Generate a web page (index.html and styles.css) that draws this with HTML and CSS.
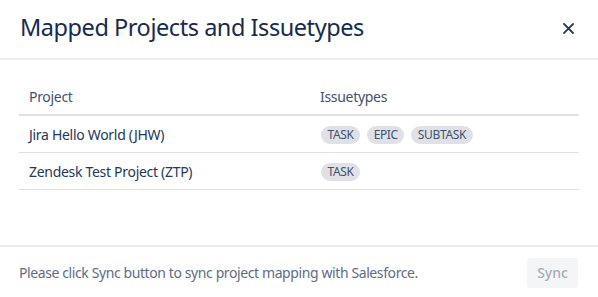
FILE: index.html
```html
<!DOCTYPE html>
<html>
<head>
<meta charset="utf-8">
<link rel="stylesheet" href="styles.css">
</head>
<body>
<div class="modal">
  <header class="modal-header">
    <h1 class="title">Mapped Projects and Issuetypes</h1>
    <button class="close" aria-label="Close">
      <svg width="11" height="11" viewBox="0 0 11 11"><path d="M1 1L10 10M10 1L1 10" stroke="#253858" stroke-width="1.8" stroke-linecap="square"/></svg>
    </button>
  </header>
  <main class="modal-body">
    <table class="grid">
      <thead>
        <tr><th class="col-project">Project</th><th>Issuetypes</th></tr>
      </thead>
      <tbody>
        <tr>
          <td>Jira Hello World (JHW)</td>
          <td><div class="tags"><span class="tag">TASK</span><span class="tag">EPIC</span><span class="tag">SUBTASK</span></div></td>
        </tr>
        <tr>
          <td>Zendesk Test Project (ZTP)</td>
          <td><div class="tags"><span class="tag">TASK</span></div></td>
        </tr>
      </tbody>
    </table>
  </main>
  <footer class="modal-footer">
    <p class="note">Please click Sync button to sync project mapping with Salesforce.</p>
    <button class="sync" disabled>Sync</button>
  </footer>
</div>
</body>
</html>
```
FILE: styles.css
```css
html, body {
  margin: 0;
  padding: 0;
  background: #fff;
}
body {
  font-family: "Noto Sans", "Open Sans", sans-serif;
  color: #172b4d;
  width: 598px;
  height: 297px;
  overflow: hidden;
}
.modal {
  display: flex;
  flex-direction: column;
  height: 297px;
}
.modal-header {
  display: flex;
  align-items: center;
  justify-content: space-between;
  box-sizing: border-box;
  height: 60px;
  padding: 0 19px 2px 20px;
  border-bottom: 2px solid #ebecf0;
}
.title {
  margin: 0;
  font-size: 23.5px;
  letter-spacing: -0.45px;
  font-weight: 400;
  color: #172b4d;
  line-height: 1;
}
.close {
  border: 0;
  background: none;
  padding: 0;
  width: 11px;
  height: 11px;
  margin: 0 5px 0 0;
  display: flex;
}
.modal-body {
  flex: 1;
  padding: 19px 19px 0 19px;
}
.grid {
  width: 560px;
  border-collapse: collapse;
  font-size: 14px;
  letter-spacing: -0.3px;
  color: #253858;
}
.grid th {
  text-align: left;
  font-weight: 400;
  color: #42526e;
  height: 35px;
  padding: 0 10px;
  border-bottom: 2px solid #dfe1e6;
  vertical-align: middle;
}
.col-project {
  width: 271px;
}
.grid td {
  height: 36px;
  padding: 0 10px;
  border-bottom: 1px solid #dfe1e6;
  vertical-align: middle;
}
.tags {
  display: flex;
  gap: 6px;
  padding-top: 2px;
}
.tag {
  display: inline-block;
  background: #dfe1e6;
  color: #42526e;
  font-size: 12px;
  letter-spacing: -0.35px;
  line-height: 18px;
  padding: 0 6.5px;
  border-radius: 9px;
  margin-left: 1px;
}
.modal-footer {
  display: flex;
  align-items: center;
  justify-content: space-between;
  border-top: 2px solid #ebecf0;
  padding: 1px 20px 0 19px;
  height: 49px;
}
.note {
  margin: 0;
  font-size: 14px;
  letter-spacing: -0.4px;
  color: #5e6c84;
}
.sync {
  border: 0;
  border-radius: 3px;
  background: #f4f5f7;
  color: #a5adba;
  font-family: inherit;
  font-size: 14px;
  font-weight: 500;
  width: 51px;
  height: 30px;
  padding: 0;
}
```
